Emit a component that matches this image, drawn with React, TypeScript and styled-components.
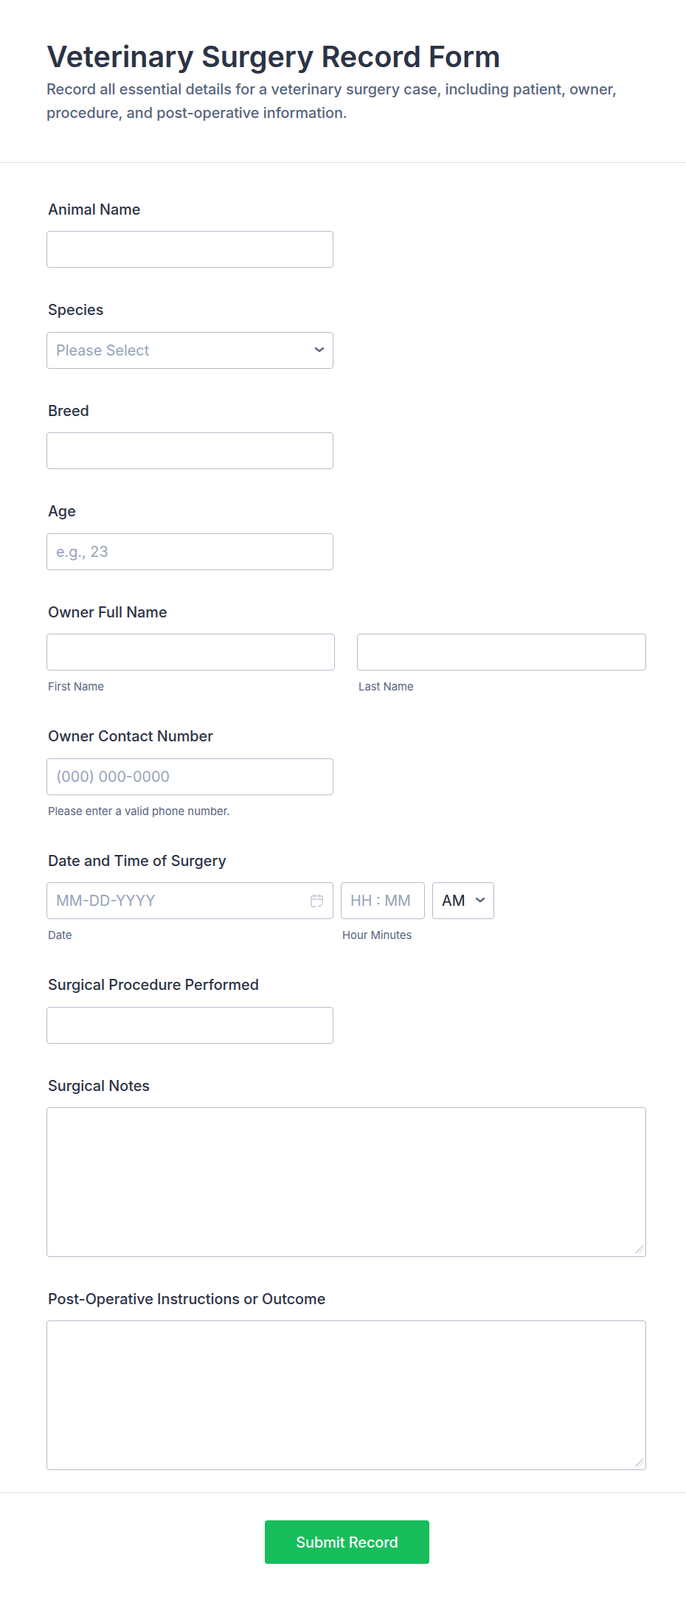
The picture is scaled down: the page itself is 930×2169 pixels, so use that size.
import { ReactNode } from 'react'
import styled, { createGlobalStyle } from 'styled-components'

const GlobalStyle = createGlobalStyle`
  html, body {
    margin: 0;
    padding: 0;
    background: #fff;
  }
  * {
    box-sizing: border-box;
  }
`

const Chevron = () => (
  <svg width="14" height="9" viewBox="0 0 14 9" fill="none">
    <path d="M2 2l5 4.200 5-4.200" stroke="#57647e" strokeWidth="2.4" strokeLinecap="round" strokeLinejoin="round" />
  </svg>
)

const CalendarIcon = () => (
  <svg width="19" height="20" viewBox="0 0 19 20" fill="none" stroke="#c3c8d2" strokeWidth="1.4" strokeLinecap="round" strokeLinejoin="round">
    <path d="M8 18H4a2 2 0 0 1-2-2V5.500a2 2 0 0 1 2-2h11a2 2 0 0 1 2 2V13" />
    <path d="M2 8h15M6 1.500v3.500M13 1.500v3.500" />
    <path d="M11.500 16.500l1.700 1.500L17 14.800" />
  </svg>
)

type FieldProps = {
  label: string
  children: ReactNode
}

const Field = ({ label, children }: FieldProps) => (
  <FieldBlock>
    <Label>{label}</Label>
    {children}
  </FieldBlock>
)

export default function App() {
  return (
    <Page>
      <GlobalStyle />
      <Header>
        <Title>Veterinary Surgery Record Form</Title>
        <Subtitle>
          Record all essential details for a veterinary surgery case, including patient, owner, procedure, and
          post-operative information.
        </Subtitle>
      </Header>
      <Form>
        <Field label="Animal Name">
          <TextInput type="text" />
        </Field>
        <Field label="Species">
          <SelectWrap>
            <PlaceholderSelect defaultValue="">
              <option value="">Please Select</option>
            </PlaceholderSelect>
            <ArrowSlot>
              <Chevron />
            </ArrowSlot>
          </SelectWrap>
        </Field>
        <Field label="Breed">
          <TextInput type="text" />
        </Field>
        <Field label="Age">
          <TextInput type="text" placeholder="e.g., 23" />
        </Field>
        <Field label="Owner Full Name">
          <NameRow>
            <div>
              <WideInput type="text" />
              <SubLabel>First Name</SubLabel>
            </div>
            <div>
              <WideInput type="text" />
              <SubLabel>Last Name</SubLabel>
            </div>
          </NameRow>
        </Field>
        <Field label="Owner Contact Number">
          <TextInput type="tel" placeholder="(000) 000-0000" />
          <SubLabel>Please enter a valid phone number.</SubLabel>
        </Field>
        <Field label="Date and Time of Surgery">
          <DateRow>
            <div>
              <DateWrap>
                <TextInput type="text" placeholder="MM-DD-YYYY" />
                <CalendarSlot>
                  <CalendarIcon />
                </CalendarSlot>
              </DateWrap>
              <SubLabel>Date</SubLabel>
            </div>
            <div>
              <TimeInput type="text" placeholder="HH : MM" />
              <SubLabel>Hour Minutes</SubLabel>
            </div>
            <AmpmWrap>
              <AmpmSelect defaultValue="AM">
                <option value="AM">AM</option>
                <option value="PM">PM</option>
              </AmpmSelect>
              <ArrowSlot>
                <Chevron />
              </ArrowSlot>
            </AmpmWrap>
          </DateRow>
        </Field>
        <Field label="Surgical Procedure Performed">
          <TextInput type="text" />
        </Field>
        <Field label="Surgical Notes">
          <TextArea />
        </Field>
        <Field label="Post-Operative Instructions or Outcome">
          <TextArea />
        </Field>
      </Form>
      <Footer>
        <SubmitButton type="button">Submit Record</SubmitButton>
      </Footer>
    </Page>
  )
}

const Page = styled.div`
  width: 930px;
  min-height: 2169px;
  background: #fff;
  color: #2c3345;
  font-family: Inter, 'Liberation Sans', sans-serif;
`

const Header = styled.header`
  height: 221px;
  padding: 53px 54px 0 63px;
  border-bottom: 1px solid #dfe1e9;
`

const Title = styled.h1`
  margin: 0;
  font-size: 39.6px;
  line-height: 48px;
  font-weight: 600;
  color: #2c3345;
`

const Subtitle = styled.p`
  margin: 4px 0 0;
  font-size: 19.8px;
  line-height: 32px;
  font-weight: 500;
  color: #57647e;
`

const Form = styled.form`
  padding: 50.5px 54px 30.5px 63px;
  display: flex;
  flex-direction: column;
`

const FieldBlock = styled.div`
  padding-bottom: 45px;
  &:last-child {
    padding-bottom: 0;
  }
`

const Label = styled.label`
  display: block;
  padding-left: 2px;
  margin-bottom: 17px;
  font-size: 19.8px;
  line-height: 24.5px;
  font-weight: 500;
  color: #2c3345;
`

const TextInput = styled.input`
  display: block;
  width: 389px;
  height: 50px;
  padding: 0 12px;
  border: 1px solid #b6bbca;
  border-radius: 4px;
  background: #fff;
  font-family: inherit;
  font-size: 19.8px;
  color: #2c3345;
  outline: none;
  &::placeholder {
    color: #94a3b8;
    opacity: 1;
  }
`

const WideInput = styled(TextInput)`
  width: 100%;
`

const TimeInput = styled(TextInput)`
  width: 114px;
`

const SubLabel = styled.div`
  margin-top: 12px;
  padding-left: 2px;
  font-size: 14.85px;
  line-height: 20px;
  color: #57647e;
`

const NameRow = styled.div`
  display: grid;
  grid-template-columns: 391px 392px;
  column-gap: 30px;
`

const SelectWrap = styled.div`
  position: relative;
  width: 389px;
`

const PlaceholderSelect = styled.select`
  display: block;
  width: 100%;
  height: 50px;
  padding: 0 12px;
  appearance: none;
  border: 1px solid #b6bbca;
  border-radius: 4px;
  background: #fff;
  font-family: inherit;
  font-size: 19.8px;
  color: #94a3b8;
  outline: none;
`

const ArrowSlot = styled.span`
  position: absolute;
  top: 20px;
  right: 12px;
  display: flex;
  pointer-events: none;
`

const DateRow = styled.div`
  display: flex;
  column-gap: 10px;
  align-items: flex-start;
`

const DateWrap = styled.div`
  position: relative;
  width: 389px;
`

const CalendarSlot = styled.span`
  position: absolute;
  top: 15px;
  right: 13px;
  display: flex;
  pointer-events: none;
`

const AmpmWrap = styled.div`
  position: relative;
  width: 84px;
`

const AmpmSelect = styled(PlaceholderSelect)`
  color: #18202f;
`

const TextArea = styled.textarea`
  display: block;
  width: 813px;
  height: 202.5px;
  border: 1px solid #b6bbca;
  border-radius: 4px;
  background: #fff;
  outline: none;
  &::-webkit-resizer {
    background: linear-gradient(
        135deg,
        transparent 48%,
        #c9cdd6 48%,
        #c9cdd6 55%,
        transparent 55%,
        transparent 69%,
        #c9cdd6 69%,
        #c9cdd6 76%,
        transparent 76%
      )
      no-repeat 1px 0 / 11px 11px;
  }
`

const Footer = styled.footer`
  height: 146px;
  padding: 37px 0 0 11px;
  border-top: 1px solid #dfe1e9;
  display: flex;
  justify-content: center;
`

const SubmitButton = styled.button`
  width: 223px;
  height: 59px;
  border: none;
  border-radius: 4px;
  background: #18bd5b;
  color: #fff;
  font-family: inherit;
  font-size: 19.8px;
  font-weight: 500;
`
